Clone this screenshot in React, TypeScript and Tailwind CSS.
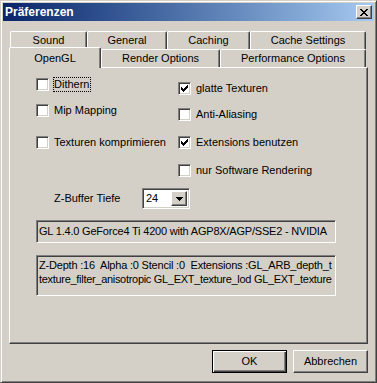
import React from "react";

const raised =
  "border border-t-white border-l-white border-r-[#404040] border-b-[#404040] shadow-[inset_-1px_-1px_#808080]";
const sunken =
  "border border-t-[#808080] border-l-[#808080] border-r-white border-b-white shadow-[inset_1px_1px_#404040,inset_-1px_-1px_#d4d0c8]";

function CheckMark() {
  return (
    <svg width="7" height="7" viewBox="0 0 7 7" shapeRendering="crispEdges" className="block">
      <path
        d="M0 2h1v3H0z M1 3h1v3H1z M2 4h1v3H2z M3 3h1v3H3z M4 2h1v3H4z M5 1h1v3H5z M6 0h1v3H6z"
        fill="#000"
      />
    </svg>
  );
}

function Checkbox({ checked, label, focus }: { checked?: boolean; label: string; focus?: boolean }) {
  return (
    <div className="flex h-[16px] items-center">
      <div className={`${sunken} flex h-[13px] w-[13px] shrink-0 items-center justify-center bg-white`}>
        {checked && <CheckMark />}
      </div>
      {focus ? (
        <span className="ml-[4px] border border-dotted border-black pr-[1px] leading-[13px]">{label}</span>
      ) : (
        <span className="ml-[5px] leading-[13px]">{label}</span>
      )}
    </div>
  );
}

function Tab({ label, w, selected }: { label: string; w: string; selected?: boolean }) {
  if (selected) {
    return (
      <div
        className={`relative z-10 -mb-[1px] flex h-[21px] ${w} items-start justify-center rounded-tl-[2px] rounded-tr-[2px] border-t border-l border-r border-t-white border-l-white border-r-[#404040] bg-[#d4d0c8] pt-[2px] shadow-[inset_-1px_0_#808080]`}
      >
        {label}
      </div>
    );
  }
  return (
    <div
      className={`flex h-[18px] ${w} items-center justify-center rounded-tl-[2px] rounded-tr-[2px] border-t border-l border-r border-t-white border-l-white border-r-[#404040] bg-[#d4d0c8] shadow-[inset_-1px_0_#808080]`}
    >
      {label}
    </div>
  );
}

export default function App() {
  return (
    <div className="h-[383px] w-[377px] border border-t-[#d4d0c8] border-l-[#d4d0c8] border-r-[#404040] border-b-[#404040] bg-[#d4d0c8] p-[2px] font-['Liberation_Sans',Arial,sans-serif] text-[11px] text-black shadow-[inset_1px_1px_#fff,inset_-1px_-1px_#808080]">
      {/* title bar */}
      <div className="flex h-[18px] items-center justify-between bg-linear-to-r from-[#0a246a] to-[#a6caf0] pl-[2px] pr-[2px]">
        <span className="text-[12px] font-bold text-white">Präferenzen</span>
        <div className={`${raised} flex h-[14px] w-[16px] items-center justify-center bg-[#d4d0c8]`}>
          <svg width="8" height="7" viewBox="0 0 8 7" shapeRendering="crispEdges" className="block">
            <path
              d="M0 0h2v1H0z M6 0h2v1H6z M1 1h2v1H1z M5 1h2v1H5z M2 2h4v1H2z M3 3h2v1H3z M2 4h4v1H2z M1 5h2v1H1z M5 5h2v1H5z M0 6h2v1H0z M6 6h2v1H6z"
              fill="#000"
            />
          </svg>
        </div>
      </div>

      {/* tab control */}
      <div className="ml-[6px] mt-[10px] w-[359px]">
        <div className="ml-[1px] flex h-[18px]">
          <Tab label="Sound" w="w-[77px]" />
          <Tab label="General" w="w-[80px]" />
          <Tab label="Caching" w="w-[83px]" />
          <Tab label="Cache Settings" w="w-[116px]" />
        </div>
        <div className="flex h-[18px] items-end">
          <Tab label="OpenGL" w="w-[92px]" selected />
          <Tab label="Render Options" w="w-[119px]" />
          <Tab label="Performance Options" w="w-[146px]" />
        </div>

        <div className="h-[277px] w-[359px] border border-t-white border-l-white border-r-[#404040] border-b-[#404040] shadow-[inset_-1px_-1px_#808080]">
          <div className="flex items-start pl-[26px]">
            <div className="flex w-[142px] flex-col">
              <div className="mt-[8px]">
                <Checkbox label="Dithern" focus />
              </div>
              <div className="mt-[10px]">
                <Checkbox label="Mip Mapping" />
              </div>
              <div className="mt-[16px]">
                <Checkbox label="Texturen komprimieren" />
              </div>
            </div>
            <div className="flex flex-col">
              <div className="mt-[12px]">
                <Checkbox label="glatte Texturen" checked />
              </div>
              <div className="mt-[10px]">
                <Checkbox label="Anti-Aliasing" />
              </div>
              <div className="mt-[12px]">
                <Checkbox label="Extensions benutzen" checked />
              </div>
              <div className="mt-[12px]">
                <Checkbox label="nur Software Rendering" />
              </div>
            </div>
          </div>

          {/* z-buffer */}
          <div className="mt-[10px] flex h-[21px] items-center pl-[44px]">
            <span className="w-[88px]">Z-Buffer Tiefe</span>
            <div className={`${sunken} flex h-[21px] w-[48px] items-stretch bg-white p-[2px]`}>
              <span className="flex-1 pl-[1px] leading-[15px]">24</span>
              <div className={`${raised} flex w-[16px] items-center justify-center bg-[#d4d0c8]`}>
                <svg width="7" height="4" viewBox="0 0 7 4" shapeRendering="crispEdges" className="block">
                  <path d="M0 0h7v1H0z M1 1h5v1H1z M2 2h3v1H2z M3 3h1v1H3z" fill="#000" />
                </svg>
              </div>
            </div>
          </div>

          <div className={`${sunken} ml-[26px] mt-[11px] flex h-[23px] w-[300px] items-center overflow-hidden bg-[#d4d0c8] px-[2px] tracking-[-0.2px] whitespace-nowrap`}>
            GL 1.4.0 GeForce4 Ti 4200 with AGP8X/AGP/SSE2 - NVIDIA
          </div>

          <div className={`${sunken} ml-[26px] mt-[12px] h-[41px] w-[300px] overflow-hidden bg-[#d4d0c8] px-[2px] pt-[2px] leading-[14px] whitespace-nowrap`}>
            <div className="tracking-[-0.2px]">Z-Depth :16&nbsp; Alpha :0 Stencil :0&nbsp; Extensions :GL_ARB_depth_t</div>
            <div className="tracking-[-0.3px]">texture_filter_anisotropic GL_EXT_texture_lod GL_EXT_texture</div>
          </div>
        </div>

        {/* buttons */}
        <div className="mt-[6px] flex justify-end gap-[6px]">
          <button className="flex h-[23px] w-[75px] items-center justify-center border border-black bg-[#d4d0c8] shadow-[inset_1px_1px_#fff,inset_-1px_-1px_#404040,inset_-2px_-2px_#808080]">
            OK
          </button>
          <button className={`${raised} flex h-[23px] w-[75px] items-center justify-center bg-[#d4d0c8]`}>
            Abbrechen
          </button>
        </div>
      </div>
    </div>
  );
}
